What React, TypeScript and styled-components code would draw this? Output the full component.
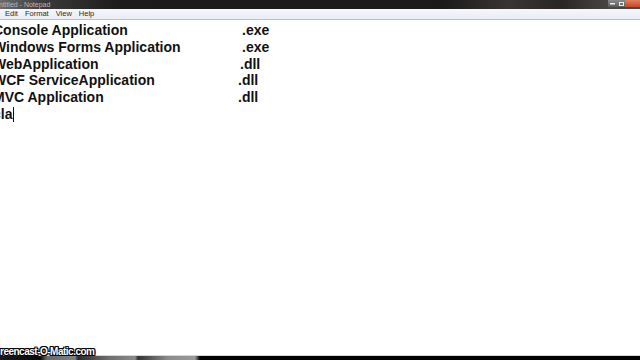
import React from "react";
import styled, { createGlobalStyle } from "styled-components";

const Global = createGlobalStyle`
  html, body { margin: 0; padding: 0; background: #fff; }
  body { width: 640px; height: 360px; overflow: hidden; }
`;

const Screen = styled.div`
  position: relative;
  width: 640px;
  height: 360px;
  display: flex;
  flex-direction: column;
  overflow: hidden;
  background: #fff;
`;

const TitleBar = styled.div`
  height: 9px;
  display: flex;
  align-items: center;
  justify-content: space-between;
  background: linear-gradient(90deg, #6b6b6b 0px, #3a3a3a 45px, #1e1c1b 120px, #1b1a19 440px, #3a3532 510px, #2a2624 560px, #4a4644 610px);
`;

const TitleText = styled.span`
  font-family: "Liberation Sans", Arial, sans-serif;
  font-size: 7px;
  line-height: 9px;
  color: #b8b8b8;
  margin-left: -1px;
  white-space: nowrap;
`;

const Controls = styled.div`
  display: flex;
  align-items: flex-start;
  height: 9px;
`;

const CtrlBtn = styled.div<{ $w: number; $bg: string }>`
  width: ${(p) => p.$w}px;
  height: 7px;
  background: ${(p) => p.$bg};
  display: flex;
  align-items: center;
  justify-content: center;
`;

const MenuBar = styled.div`
  height: 10px;
  display: flex;
  align-items: center;
  gap: 7px;
  padding-left: 5px;
  background: linear-gradient(180deg, #f6f7fb, #e9ecf4);
  border-bottom: 1px solid #b9c0cc;
`;

const MenuItem = styled.span`
  font-family: "Liberation Sans", Arial, sans-serif;
  font-size: 7.5px;
  line-height: 10px;
  color: #2a2a2a;
`;

const Editor = styled.div`
  flex: 1;
  padding-top: 2px;
  background: #fff;
  font-family: "Liberation Sans", Arial, sans-serif;
  font-weight: bold;
  font-size: 14px;
  line-height: 16.8px;
  color: #111;
`;

const Line = styled.div`
  position: relative;
  height: 16.8px;
  margin-left: -7px;
  white-space: nowrap;
`;

const Ext = styled.span<{ $x: number }>`
  position: absolute;
  left: ${(p) => p.$x + 7}px;
  top: 0;
`;

const Caret = styled.span`
  display: inline-block;
  width: 1px;
  height: 15px;
  background: #111;
  vertical-align: -3px;
  margin-left: 1px;
`;

const Taskbar = styled.div`
  height: 4px;
  border-top: 1px solid #d6d6d6;
  background: linear-gradient(90deg, #1a1a1a 0px, #0a0a0a 40px, #6a6a6a 47px, #808080 75px, #2a2a2a 78px, #6e6e6e 108px, #8a8a8a 135px, #333 138px, #8c8c8c 168px, #999 195px, #000 200px, #000 640px);
`;

const Watermark = styled.div`
  position: absolute;
  left: 0;
  top: 346px;
  font-family: "Liberation Sans", Arial, sans-serif;
  font-weight: bold;
  font-size: 10px;
  line-height: 11px;
  color: #fff;
  text-shadow: -1px 0 #000, 1px 0 #000, 0 -1px #000, 0 1px #000, 1px 1px #000, -1px -1px #000, 1px -1px #000, -1px 1px #000;
  letter-spacing: -0.5px;
  white-space: nowrap;
`;

const rows: { name: string; ext: string; x: number }[] = [
  { name: "Console Application", ext: ".exe", x: 242 },
  { name: "Windows Forms Application", ext: ".exe", x: 242 },
  { name: "WebApplication", ext: ".dll", x: 240 },
  { name: "WCF ServiceApplication", ext: ".dll", x: 238 },
  { name: "MVC Application", ext: ".dll", x: 238 },
];

export default function App() {
  return (
    <Screen>
      <Global />
      <TitleBar>
        <TitleText>ntitled - Notepad</TitleText>
        <Controls>
          <CtrlBtn $w={9} $bg="linear-gradient(180deg,#8a8a8a,#5a5a5a)">
            <svg width="5" height="2" viewBox="0 0 5 2"><rect width="5" height="1.5" fill="#eee" /></svg>
          </CtrlBtn>
          <CtrlBtn $w={8} $bg="linear-gradient(180deg,#8a8a8a,#5a5a5a)">
            <svg width="5" height="4" viewBox="0 0 5 4"><rect x="0.5" y="0.5" width="4" height="3" fill="none" stroke="#eee" /></svg>
          </CtrlBtn>
          <CtrlBtn $w={15} $bg="linear-gradient(180deg,#e08060,#c8452a)" />
        </Controls>
      </TitleBar>
      <MenuBar>
        <MenuItem>Edit</MenuItem>
        <MenuItem>Format</MenuItem>
        <MenuItem>View</MenuItem>
        <MenuItem>Help</MenuItem>
      </MenuBar>
      <Editor>
        {rows.map((r) => (
          <Line key={r.name}>
            {r.name}
            <Ext $x={r.x}>{r.ext}</Ext>
          </Line>
        ))}
        <Line>
          cla<Caret />
        </Line>
      </Editor>
      <Taskbar />
      <Watermark>reencast-O-Matic.com</Watermark>
    </Screen>
  );
}
